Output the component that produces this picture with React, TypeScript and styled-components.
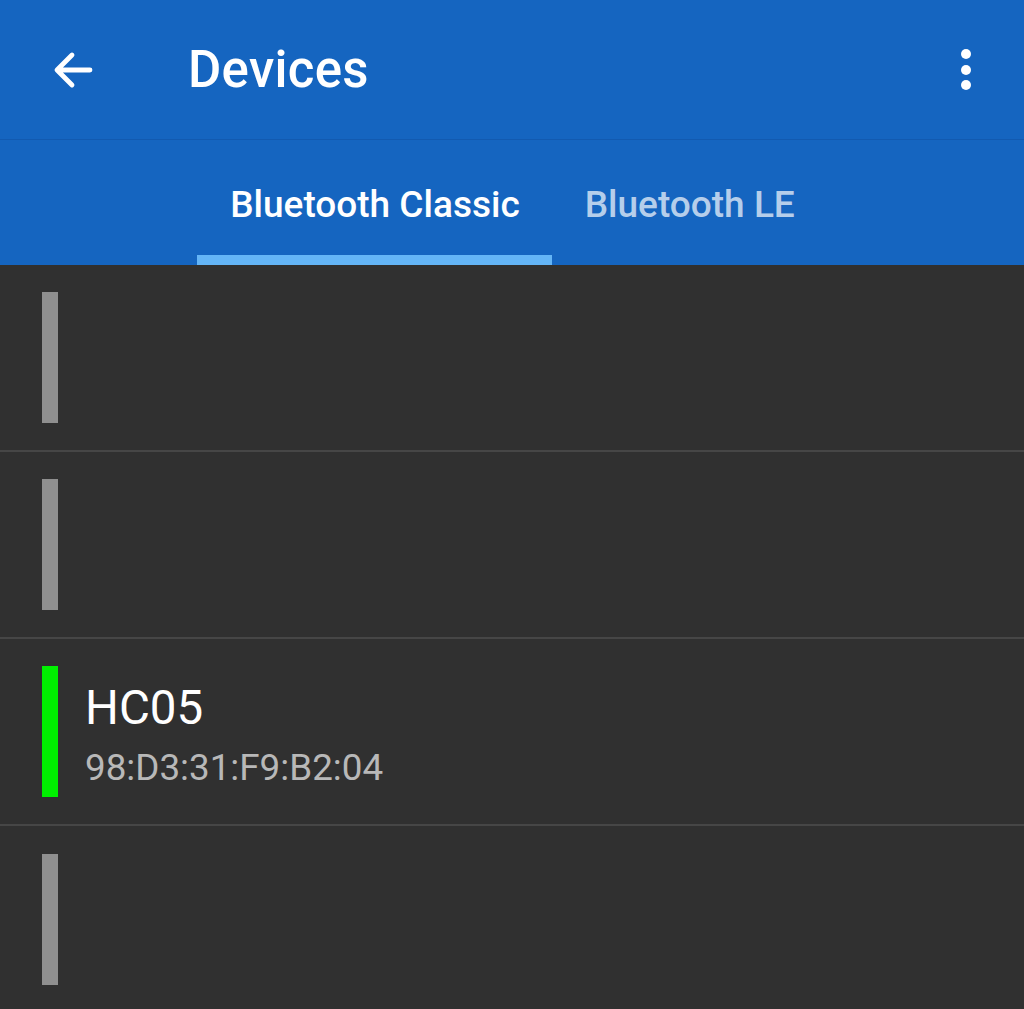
import React from "react";
import styled, { createGlobalStyle } from "styled-components";

const GlobalStyle = createGlobalStyle`
  html, body { margin: 0; padding: 0; background: #303030; }
  body { font-family: Roboto, "Noto Sans", Arial, sans-serif; }
  * { box-sizing: border-box; }
`;

const Page = styled.div`
  width: 1024px;
  min-height: 1009px;
  background: #303030;
  overflow: hidden;
`;

const Header = styled.header`
  background: #1565c0;
`;

const Toolbar = styled.div`
  height: 140px;
  display: flex;
  align-items: center;
  padding: 0 31px 0 46px;
  border-bottom: 1px solid #125ab0;
`;

const IconButton = styled.div`
  width: 54px;
  height: 54px;
  display: flex;
  align-items: center;
  justify-content: center;
`;

const Title = styled.h1`
  margin: 0 0 0 88px;
  flex: 1;
  color: #ffffff;
  font-size: 51px;
  font-weight: 500;
  letter-spacing: 0.3px;
`;

const TabBar = styled.nav`
  height: 125px;
  display: flex;
  justify-content: center;
`;

const Tab = styled.div<{ $active?: boolean }>`
  display: flex;
  align-items: center;
  padding: 14px 32px 0 33px;
  height: 100%;
  font-size: 37px;
  font-weight: 500;
  color: ${(p) => (p.$active ? "#ffffff" : "rgba(255,255,255,0.7)")};
  border-bottom: 10px solid ${(p) => (p.$active ? "#64b5f6" : "transparent")};
`;

const List = styled.div`
  display: flex;
  flex-direction: column;
`;

const Row = styled.div`
  height: 187px;
  display: flex;
  align-items: center;
  padding-left: 42px;
  border-bottom: 2px solid #464646;
  &:last-child { border-bottom: none; }
`;

const StatusBar = styled.div<{ $online?: boolean }>`
  width: 16px;
  height: 131px;
  background: ${(p) => (p.$online ? "#00f000" : "#8f8f8f")};
  flex-shrink: 0;
`;

const Info = styled.div`
  margin-left: 27px;
  display: flex;
  flex-direction: column;
  margin-top: 6px;
`;

const Name = styled.div`
  color: #ffffff;
  font-size: 47.5px;
  line-height: 54px;
`;

const Address = styled.div`
  color: #b8b8b8;
  font-size: 36.8px;
  line-height: 42px;
  margin-top: 12px;
`;

const BackArrow = () => (
  <svg width="48" height="48" viewBox="0 0 24 24">
    <path
      d="M20.5 12H4.5M11.5 4.5L4 12l7.5 7.5"
      fill="none"
      stroke="#ffffff"
      strokeWidth="2.4"
      strokeLinecap="round"
      strokeLinejoin="round"
    />
  </svg>
);

const MoreIcon = () => (
  <svg width="20" height="44" viewBox="0 0 20 44">
    <circle cx="10" cy="6" r="5" fill="#ffffff" />
    <circle cx="10" cy="22" r="5" fill="#ffffff" />
    <circle cx="10" cy="37" r="5" fill="#ffffff" />
  </svg>
);

type Device = { name?: string; address?: string; online?: boolean };

const devices: Device[] = [
  {},
  {},
  { name: "HC05", address: "98:D3:31:F9:B2:04", online: true },
  {},
];

export default function App() {
  return (
    <Page>
      <GlobalStyle />
      <Header>
        <Toolbar>
          <IconButton>
            <BackArrow />
          </IconButton>
          <Title>Devices</Title>
          <IconButton>
            <MoreIcon />
          </IconButton>
        </Toolbar>
        <TabBar>
          <Tab $active>Bluetooth Classic</Tab>
          <Tab>Bluetooth LE</Tab>
        </TabBar>
      </Header>
      <List>
        {devices.map((d, i) => (
          <Row key={i}>
            <StatusBar $online={d.online} />
            {d.name && (
              <Info>
                <Name>{d.name}</Name>
                <Address>{d.address}</Address>
              </Info>
            )}
          </Row>
        ))}
      </List>
    </Page>
  );
}
